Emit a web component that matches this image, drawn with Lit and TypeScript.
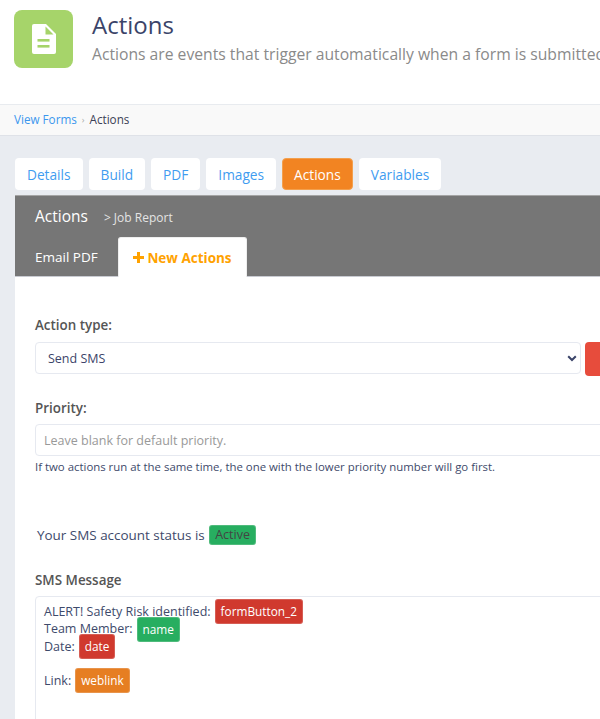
import { LitElement, html, css } from "lit";
import { customElement } from "lit/decorators.js";

@customElement("app-root")
export class AppRoot extends LitElement {
  static styles = css`
    :host { display: block; width: 600px; height: 719px; overflow: hidden; background: #e9ecf1; font-family: "Open Sans", sans-serif; color: #3e4a6b; }
    * { box-sizing: border-box; }
    .head { height: 104px; background: #fff; display: flex; padding: 10px 0 0 14px; gap: 19px; white-space: nowrap; }
    .logo { width: 59px; height: 58px; border-radius: 8px; background: #a6d46a; display: flex; align-items: center; justify-content: center; flex: none; }
    .title { font-size: 24px; line-height: 33px; color: #3b4469; margin-top: -2px; }
    .sub { font-size: 15.7px; line-height: 22px; color: #8a8a8a; margin-top: 2px; }
    .crumb { height: 32px; background: #f9f9f9; border-top: 1px solid #e8ebef; border-bottom: 1px solid #dfe2e8; padding: 0 0 2px 14px; display: flex; align-items: center; font-size: 11.7px; }
    .crumb a { color: #3b97ee; }
    .crumb i { font-style: normal; color: #aaa; margin: 0 5px; font-size: 9px; }
    .crumb span { color: #3b4055; }
    .tabs { display: flex; gap: 6px; padding: 22px 0 0 15px; height: 59px; }
    .tab { height: 32px; padding: 0 12px; border-radius: 4px; background: #fff; color: #3f9cf0; font-size: 13.7px; display: flex; align-items: center; }
    .tab.on { background: #f28422; color: #fff; border: 1px solid #f3a04e; padding: 0 11px; }
    .panel { margin-left: 15px; width: 640px; height: 524px; background: #fff; }
    .band { height: 82px; background: #767676; border-top: 1px solid #a5a5a5; border-bottom: 1px solid #c9cbd2; color: #fff; padding-left: 20px; display: flex; flex-direction: column; }
    .band-top { display: flex; align-items: baseline; height: 41px; padding-top: 9px; }
    .band-top b { font-weight: 400; font-size: 15.5px; }
    .band-top span { font-size: 12px; margin-left: 16px; color: #e4e4e4; }
    .band-tabs { display: flex; align-items: stretch; height: 39px; }
    .band-tab { font-size: 13.5px; display: flex; align-items: center; width: 83px; }
    .band-tab.on { width: 129px; background: #fff; border-radius: 3px 3px 0 0; color: #ffa200; font-weight: 700; justify-content: center; margin-bottom: -1px; gap: 3px; border: 1px solid #eee; border-bottom: 0; }
    .form { padding: 39px 0 0 20px; }
    label { display: block; font-size: 13.4px; line-height: 18px; font-weight: 600; color: #555; }
    .row { display: flex; gap: 4px; margin-top: 8px; }
    .select { width: 546px; height: 32px; border: 1px solid #e6e9f0; border-radius: 4px; padding: 0 0 0 12px; display: flex; align-items: center; justify-content: space-between; font-size: 12.5px; color: #3b4469; }
    .select svg { margin-right: 3px; }
    .del { width: 40px; height: 34px; background: #e74c3c; border-radius: 4px; }
    .input { height: 32px; border: 1px solid #e6e9f0; border-radius: 4px; padding-left: 8px; display: flex; align-items: center; font-size: 12.5px; color: #999; margin-top: 7px; }
    .help { font-size: 11.4px; line-height: 14px; margin-top: 4px; color: #3e4a6b; }
    .status { display: flex; align-items: center; gap: 4px; font-size: 13.45px; padding-left: 2px; height: 20px; margin-top: 51px; }
    .badge { display: inline-block; padding: 0 5px; border-radius: 3px; font-size: 11.8px; line-height: 23px; color: #fff; border: 1px solid #eee3; vertical-align: middle; }
    .status .badge { background: #27ae60; color: #444; font-size: 12.5px; line-height: 18px; padding: 0 5.5px; }
    .green { background: #27ae60; }
    .red { background: #d0392e; }
    .orange { background: #e67e22; }
    .editor { margin-top: 7px; height: 140px; border: 1px solid #e6e9f0; border-top-left-radius: 4px; padding: 6px 8px; font-size: 12.5px; line-height: 17.4px; }
    .editor div { height: 17.4px; display: flex; align-items: center; gap: 4px; white-space: nowrap; }
    .editor div.gap { margin-top: 17px; }
    .priority { margin-top: 23px; }
    .sms { margin-top: 26px; }
  `;

  render() {
    return html`
      <div class="head">
        <div class="logo">
          <svg width="24" height="30" viewBox="0 0 24 30">
            <path d="M2 0h12l10 10v18a2 2 0 0 1-2 2H2a2 2 0 0 1-2-2V2a2 2 0 0 1 2-2z" fill="#fff"/>
            <path d="M13.500 2.500l8 8h-8z" fill="#a6d46a"/>
            <rect x="5.500" y="15" width="12" height="2.600" fill="#a6d46a"/>
            <rect x="5.500" y="21" width="12" height="2.600" fill="#a6d46a"/>
          </svg>
        </div>
        <div>
          <div class="title">Actions</div>
          <div class="sub">Actions are events that trigger automatically when a form is submitted.</div>
        </div>
      </div>
      <div class="crumb"><a>View Forms</a><i>›</i><span>Actions</span></div>
      <div class="tabs">
        <div class="tab">Details</div>
        <div class="tab">Build</div>
        <div class="tab">PDF</div>
        <div class="tab">Images</div>
        <div class="tab on">Actions</div>
        <div class="tab">Variables</div>
      </div>
      <div class="panel">
        <div class="band">
          <div class="band-top"><b>Actions</b><span>&gt; Job Report</span></div>
          <div class="band-tabs">
            <div class="band-tab">Email PDF</div>
            <div class="band-tab on">
              <svg width="11" height="11" viewBox="0 0 11 11"><path d="M4 0h3v4h4v3H7v4H4V7H0V4h4z" fill="#ffa200"/></svg>
              New Actions
            </div>
          </div>
        </div>
        <div class="form">
          <label>Action type:</label>
          <div class="row">
            <div class="select">Send SMS
              <svg width="10" height="7" viewBox="0 0 10 7"><path d="M1.200 1.200L5 5l3.800-3.800" fill="none" stroke="#3b4469" stroke-width="2"/></svg>
            </div>
            <div class="del"></div>
          </div>
          <label class="priority">Priority:</label>
          <div class="input">Leave blank for default priority.</div>
          <div class="help">If two actions run at the same time, the one with the lower priority number will go first.</div>
          <div class="status">Your SMS account status is <span class="badge">Active</span></div>
          <label class="sms">SMS Message</label>
          <div class="editor">
            <div>ALERT! Safety Risk identified: <span class="badge red">formButton_2</span></div>
            <div>Team Member: <span class="badge green">name</span></div>
            <div>Date: <span class="badge red">date</span></div>
            <div class="gap">Link: <span class="badge orange">weblink</span></div>
          </div>
        </div>
      </div>
    `;
  }
}
